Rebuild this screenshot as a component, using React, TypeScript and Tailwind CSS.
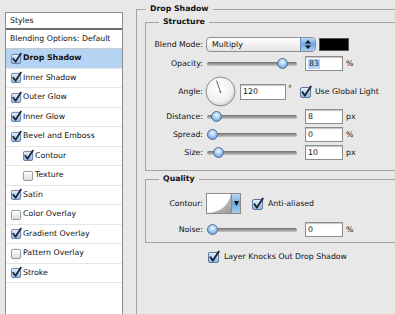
import React, { useId } from "react";

function Check({ checked, size = 12 }: { checked: boolean; size?: number }) {
  const id = useId().replace(/:/g, "");
  return (
    <svg width={size} height={size} viewBox="0 0 12 12" className="shrink-0 overflow-visible">
      <defs>
        <linearGradient id={`c${id}`} x1="0" y1="0" x2="0" y2="1">
          {checked ? (
            <>
              <stop offset="0" stopColor="#e9f2fb" />
              <stop offset="0.5" stopColor="#b9d4ee" />
              <stop offset="1" stopColor="#8fb6df" />
            </>
          ) : (
            <>
              <stop offset="0" stopColor="#ffffff" />
              <stop offset="1" stopColor="#dcdcdc" />
            </>
          )}
        </linearGradient>
      </defs>
      <rect x="0.5" y="1.5" width="10" height="10" rx="1.5" fill={`url(#c${id})`} stroke={checked ? "#5f7797" : "#8d8d8d"} />
      {checked && <path d="M2.4 6.2 L5 9.6 L10.8 0.6" fill="none" stroke="#1a2436" strokeWidth="1.9" strokeLinecap="round" strokeLinejoin="round" />}
    </svg>
  );
}

function Thumb({ left }: { left: number }) {
  return (
    <div
      className="absolute top-[2px] size-[11px] rounded-full border border-[#4f6f99] bg-[radial-gradient(circle_at_50%_35%,#f2f8fe_0%,#a6cbef_45%,#4d8bd0_100%)]"
      style={{ left }}
    />
  );
}

function Slider({ pos }: { pos: number }) {
  return (
    <div className="relative ml-[4px] w-[90px] h-[15px] flex items-center shrink-0">
      <div className="w-full h-[4px] rounded-full bg-gradient-to-b from-[#6f6f6f] to-[#c8c8c8]" />
      <Thumb left={pos} />
    </div>
  );
}

function Field({ children, className }: { children: React.ReactNode; className: string }) {
  return (
    <div className={`bg-white border border-[#8d8d8d] shadow-[inset_0_1px_1px_#c4c4c4] flex items-center pl-[2px] shrink-0 ${className}`}>
      {children}
    </div>
  );
}

function SliderRow({ label, pos, value, unit, className }: { label: string; pos: number; value: React.ReactNode; unit: string; className: string }) {
  return (
    <div className={`flex items-center h-[15px] ${className}`}>
      <div className="w-[57px] text-right shrink-0">{label}</div>
      <Slider pos={pos} />
      <Field className="ml-[8px] w-[38px] h-[15px]">{value}</Field>
      <span className="ml-[3px]">{unit}</span>
    </div>
  );
}

const items = [
  { label: "Drop Shadow", checked: true, selected: true },
  { label: "Inner Shadow", checked: true },
  { label: "Outer Glow", checked: true },
  { label: "Inner Glow", checked: true },
  { label: "Bevel and Emboss", checked: true },
  { label: "Contour", checked: true, sub: true },
  { label: "Texture", checked: false, sub: true },
  { label: "Satin", checked: true },
  { label: "Color Overlay", checked: false },
  { label: "Gradient Overlay", checked: true },
  { label: "Pattern Overlay", checked: false },
  { label: "Stroke", checked: true },
];

export default function App() {
  return (
    <div className="w-[395px] h-[314px] overflow-hidden bg-[#e8e8e8] flex text-[#111] text-[7.8px] leading-[10px] font-['DejaVu_Sans',sans-serif]">
      {/* Left styles list */}
      <div className="pl-[5px] pt-[12px] shrink-0">
        <div className="w-[118px] h-[320px] bg-white border border-[#8c8c8c] flex flex-col">
          <div className="h-[17px] flex items-center pl-[4px] border-b-2 border-[#6c6c6c]">Styles</div>
          <div className="h-[19px] flex items-center pl-[4px] border-b border-[#c9c9c9]">Blending Options: Default</div>
          {items.map((it) => (
            <div
              key={it.label}
              className={`h-[19.5px] flex items-center border-b border-[#e6e6e6] ${it.sub ? "pl-[17px]" : "pl-[5px]"} ${it.selected ? "bg-[#b5d3f3] font-bold" : ""}`}
            >
              <Check checked={it.checked} size={11} />
              <span className="ml-[1px]">{it.label}</span>
            </div>
          ))}
        </div>
      </div>

      {/* Right panel */}
      <div className="ml-[13px] shrink-0">
        <fieldset className="mt-[4px] w-[270px] h-[330px] border border-[#a3a3a3]">
          <legend className="ml-[9px] px-[4px] font-bold leading-[10px]">Drop Shadow</legend>

          <fieldset className="mt-[3px] ml-[8px] border border-[#a3a3a3] pb-[10px]">
            <legend className="ml-[13px] px-[4px] font-bold leading-[10px]">Structure</legend>

            {/* Blend Mode */}
            <div className="flex items-center h-[15px] mt-[10px]">
              <div className="w-[57px] text-right shrink-0">Blend Mode:</div>
              <div className="ml-[3px] w-[110px] h-[15px] rounded-[4px] border border-[#8e8e8e] bg-gradient-to-b from-white to-[#e4e4e4] flex items-center overflow-hidden shrink-0">
                <span className="pl-[5px] flex-1">Multiply</span>
                <div className="w-[15px] h-full border-l border-[#6f8fb8] bg-gradient-to-b from-[#b9d7f4] via-[#6fa7e0] to-[#a9cdf1] flex flex-col items-center justify-center gap-[1px]">
                  <svg width="6" height="9" viewBox="0 0 6 9">
                    <path d="M3 0 L6 3.5 L0 3.5 Z" fill="#111" />
                    <path d="M3 9 L6 5.5 L0 5.5 Z" fill="#111" />
                  </svg>
                </div>
              </div>
              <div className="ml-[3px] w-[30px] h-[13px] bg-black border border-[#555] shrink-0" />
            </div>

            <SliderRow
              className="mt-[4px]"
              label="Opacity:"
              pos={70}
              value={<span className="bg-[#b3d3f8] px-[1px]">83</span>}
              unit="%"
            />

            {/* Angle */}
            <div className="flex items-center h-[31px] mt-[5px]">
              <div className="w-[57px] text-right shrink-0">Angle:</div>
              <svg width="31" height="31" viewBox="0 0 31 31" className="ml-[2px] shrink-0">
                <defs>
                  <radialGradient id="dial" cx="0.45" cy="0.4" r="0.6">
                    <stop offset="0" stopColor="#ffffff" />
                    <stop offset="0.75" stopColor="#f0f0f0" />
                    <stop offset="1" stopColor="#cfcfcf" />
                  </radialGradient>
                </defs>
                <circle cx="15.5" cy="15.5" r="14.5" fill="url(#dial)" stroke="#8c8c8c" />
                <line x1="15.5" y1="16" x2="11.5" y2="4.5" stroke="#666" strokeWidth="1" />
                <circle cx="15.5" cy="16" r="0.9" fill="#666" />
              </svg>
              <Field className="ml-[4px] w-[46px] h-[16px]">120</Field>
              <span className="ml-[2px] self-start mt-[8px]">°</span>
              <div className="ml-[8px] flex items-center">
                <Check checked />
              </div>
              <span className="ml-[3px]">Use Global Light</span>
            </div>

            <SliderRow className="mt-[2px]" label="Distance:" pos={4} value="8" unit="px" />
            <SliderRow className="mt-[3px]" label="Spread:" pos={0} value="0" unit="%" />
            <SliderRow className="mt-[3px]" label="Size:" pos={6} value="10" unit="px" />
          </fieldset>

          <fieldset className="mt-[3px] ml-[8px] border border-[#a3a3a3] pb-[5px]">
            <legend className="ml-[13px] px-[4px] font-bold leading-[10px]">Quality</legend>

            <div className="flex items-center h-[21px] mt-[9px]">
              <div className="w-[57px] text-right shrink-0">Contour:</div>
              <div className="ml-[3px] w-[35px] h-[21px] border border-[#8a8a8a] flex shrink-0 bg-white">
                <svg width="24" height="19" viewBox="0 0 24 19" className="shrink-0">
                  <defs>
                    <linearGradient id="cg" x1="0" y1="0" x2="1" y2="1">
                      <stop offset="0" stopColor="#e6e6e6" />
                      <stop offset="1" stopColor="#9a9a9a" />
                    </linearGradient>
                  </defs>
                  <path d="M24 0 C 21 12, 14 18, 0 19 L24 19 Z" fill="url(#cg)" />
                </svg>
                <div className="flex-1 border-l border-[#6f8fb8] bg-gradient-to-b from-[#b9d7f4] via-[#6fa7e0] to-[#a9cdf1] flex items-center justify-center">
                  <svg width="5" height="5" viewBox="0 0 5 5">
                    <path d="M0 0 L5 0 L2.5 5 Z" fill="#111" />
                  </svg>
                </div>
              </div>
              <div className="ml-[11px] flex items-center">
                <Check checked />
              </div>
              <span className="ml-[4px]">Anti-aliased</span>
            </div>

            <SliderRow className="mt-[8px]" label="Noise:" pos={0} value="0" unit="%" />
          </fieldset>

          <div className="flex items-center h-[12px] mt-[8px] ml-[71px]">
            <Check checked />
            <span className="ml-[4px]">Layer Knocks Out Drop Shadow</span>
          </div>
        </fieldset>
      </div>
    </div>
  );
}
